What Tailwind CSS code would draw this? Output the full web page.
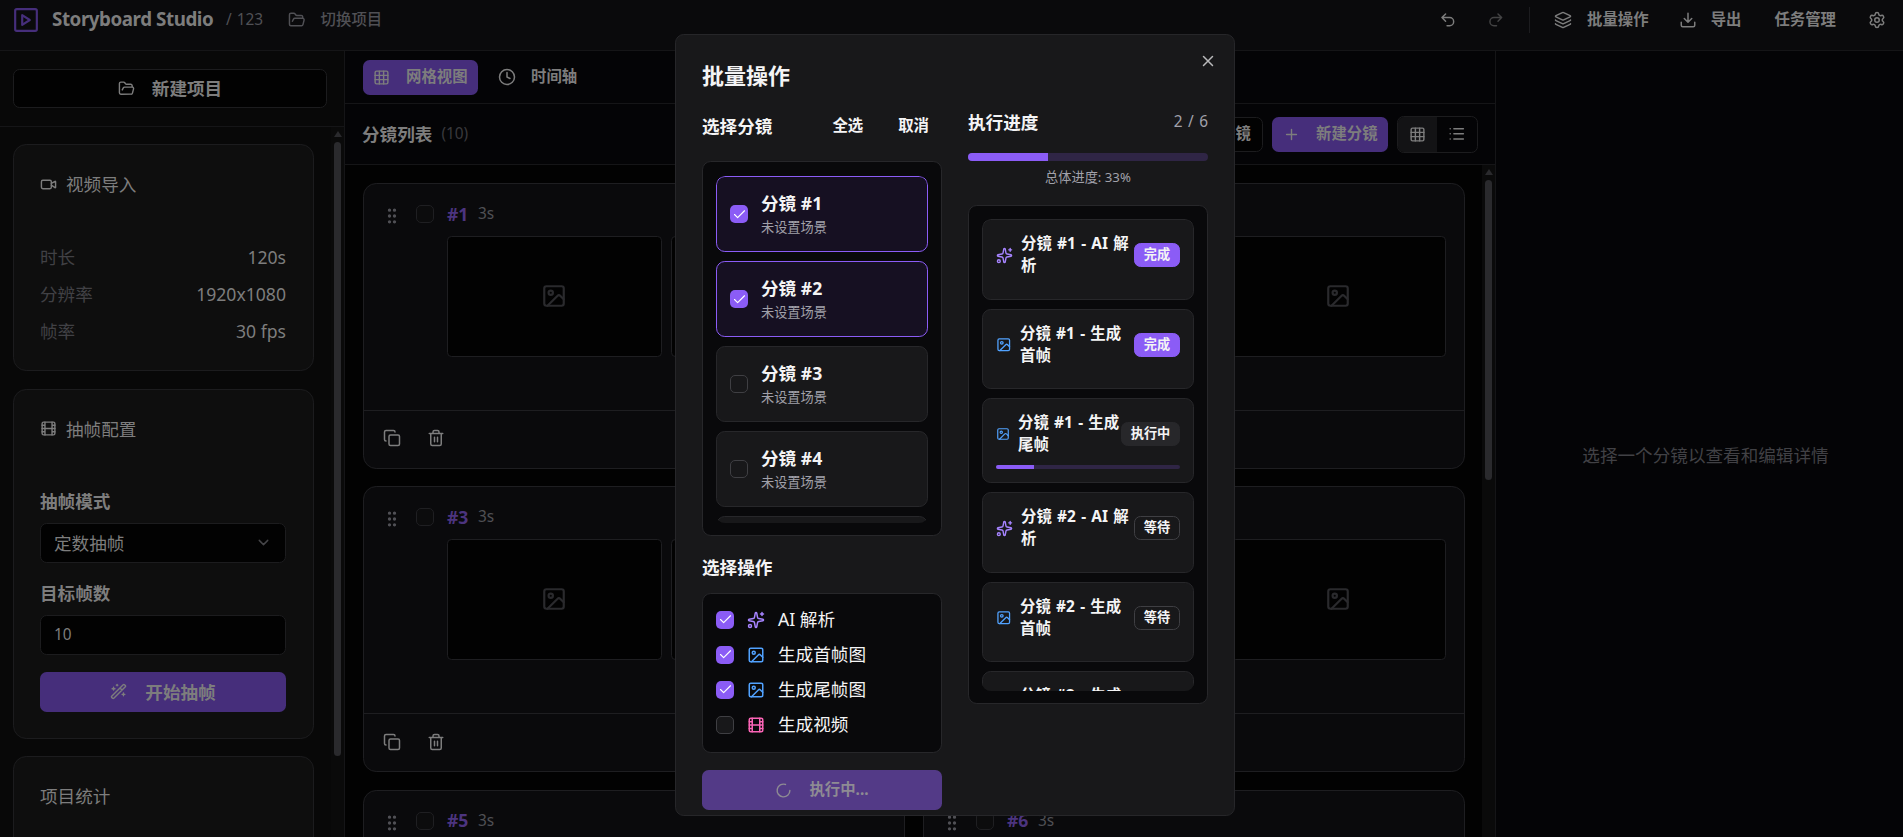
<!DOCTYPE html>
<html lang="zh-CN" class="text-[17.6px]">
<head>
<meta charset="utf-8">
<title>Storyboard Studio</title>
<script src="https://cdn.jsdelivr.net/npm/@tailwindcss/browser@4"></script>
</head>
<body class="relative flex h-screen flex-col overflow-hidden bg-black font-['Noto_Sans','Noto_Sans_CJK_SC',sans-serif] text-base text-[#7d7d7d] [stroke-linecap:round] [stroke-linejoin:round]">
<svg class="hidden">
  <symbol id="logo" viewBox="0 0 24 24"><rect x="2" y="2" width="20" height="20" rx="1.5"/><path d="M8.5 7.5v9l7-4.5z"/></symbol>
  <symbol id="folder" viewBox="0 0 24 24"><path d="m6 14 1.5-2.9A2 2 0 0 1 9.24 10H20a2 2 0 0 1 1.94 2.5l-1.54 6a2 2 0 0 1-1.95 1.5H4a2 2 0 0 1-2-2V5a2 2 0 0 1 2-2h3.9a2 2 0 0 1 1.69.9l.81 1.2a2 2 0 0 0 1.67.9H18a2 2 0 0 1 2 2v2"/></symbol>
  <symbol id="undo" viewBox="0 0 24 24"><path d="M9 14 4 9l5-5M4 9h10.5a5.5 5.5 0 0 1 0 11H11"/></symbol>
  <symbol id="redo" viewBox="0 0 24 24"><path d="m15 14 5-5-5-5M20 9H9.5a5.5 5.5 0 0 0 0 11H13"/></symbol>
  <symbol id="layers" viewBox="0 0 24 24"><path d="M12.83 2.18a2 2 0 0 0-1.66 0L2.6 6.08a1 1 0 0 0 0 1.83l8.58 3.91a2 2 0 0 0 1.66 0l8.58-3.9a1 1 0 0 0 0-1.83zM2 12a1 1 0 0 0 .58.91l8.6 3.91a2 2 0 0 0 1.65 0l8.58-3.9A1 1 0 0 0 22 12M2 17a1 1 0 0 0 .58.91l8.6 3.91a2 2 0 0 0 1.65 0l8.58-3.9A1 1 0 0 0 22 17"/></symbol>
  <symbol id="download" viewBox="0 0 24 24"><path d="M12 15V3M21 15v4a2 2 0 0 1-2 2H5a2 2 0 0 1-2-2v-4M7 10l5 5 5-5"/></symbol>
  <symbol id="gear" viewBox="0 0 24 24"><path d="M9.671 4.136a2.34 2.34 0 0 1 4.659 0 2.34 2.34 0 0 0 3.319 1.915 2.34 2.34 0 0 1 2.33 4.033 2.34 2.34 0 0 0 0 3.831 2.34 2.34 0 0 1-2.33 4.033 2.34 2.34 0 0 0-3.319 1.915 2.34 2.34 0 0 1-4.659 0 2.34 2.34 0 0 0-3.32-1.915 2.34 2.34 0 0 1-2.33-4.033 2.34 2.34 0 0 0 0-3.831A2.34 2.34 0 0 1 6.35 6.051a2.34 2.34 0 0 0 3.319-1.915"/><circle cx="12" cy="12" r="3"/></symbol>
  <symbol id="grid" viewBox="0 0 24 24"><rect x="3" y="3" width="18" height="18" rx="2"/><path d="M3 9h18M3 15h18M9 3v18M15 3v18"/></symbol>
  <symbol id="clock" viewBox="0 0 24 24"><circle cx="12" cy="12" r="10"/><path d="M12 6v6l4 2"/></symbol>
  <symbol id="video" viewBox="0 0 24 24"><path d="m16 13 5.22 3.48a.5.5 0 0 0 .78-.41V7.87a.5.5 0 0 0-.75-.43L16 10.5"/><rect x="2" y="6" width="14" height="12" rx="2"/></symbol>
  <symbol id="film" viewBox="0 0 24 24"><rect x="3" y="3" width="18" height="18" rx="2"/><path d="M7 3v18M3 7.5h4M3 12h18M3 16.5h4M17 3v18M17 7.5h4M17 16.5h4"/></symbol>
  <symbol id="chevron" viewBox="0 0 24 24"><path d="m6 9 6 6 6-6"/></symbol>
  <symbol id="wand" viewBox="0 0 24 24"><path d="m21.64 3.64-1.28-1.28a1.21 1.21 0 0 0-1.72 0L2.36 18.64a1.21 1.21 0 0 0 0 1.72l1.28 1.28a1.2 1.2 0 0 0 1.72 0L21.64 5.36a1.2 1.2 0 0 0 0-1.72M14 7l3 3M5 6v4M19 14v4M10 2v2M7 8H3M21 16h-4M11 3H9"/></symbol>
  <symbol id="plus" viewBox="0 0 24 24"><path d="M5 12h14M12 5v14"/></symbol>
  <symbol id="list" viewBox="0 0 24 24"><path d="M3 5h.01M3 12h.01M3 19h.01M8 5h13M8 12h13M8 19h13"/></symbol>
  <symbol id="grip" viewBox="0 0 24 24"><circle cx="9" cy="12" r="1"/><circle cx="9" cy="5" r="1"/><circle cx="9" cy="19" r="1"/><circle cx="15" cy="12" r="1"/><circle cx="15" cy="5" r="1"/><circle cx="15" cy="19" r="1"/></symbol>
  <symbol id="image" viewBox="0 0 24 24"><rect x="3" y="3" width="18" height="18" rx="2"/><circle cx="9" cy="9" r="2"/><path d="m21 15-3.086-3.086a2 2 0 0 0-2.828 0L6 21"/></symbol>
  <symbol id="copy" viewBox="0 0 24 24"><rect x="8" y="8" width="14" height="14" rx="2"/><path d="M4 16c-1.1 0-2-.9-2-2V4c0-1.100.9-2 2-2h10c1.100 0 2 .9 2 2"/></symbol>
  <symbol id="trash" viewBox="0 0 24 24"><path d="M10 11v6M14 11v6M19 6v14a2 2 0 0 1-2 2H7a2 2 0 0 1-2-2V6M3 6h18M8 6V4a2 2 0 0 1 2-2h4a2 2 0 0 1 2 2v2"/></symbol>
  <symbol id="close" viewBox="0 0 24 24"><path d="M18 6 6 18M6 6l12 12"/></symbol>
  <symbol id="tick" viewBox="0 0 24 24"><path d="M20 6 9 17l-5-5"/></symbol>
  <symbol id="sparkles" viewBox="0 0 24 24"><path d="M11.017 2.814a1 1 0 0 1 1.966 0l1.051 5.558a2 2 0 0 0 1.594 1.594l5.558 1.051a1 1 0 0 1 0 1.966l-5.558 1.051a2 2 0 0 0-1.594 1.594l-1.051 5.558a1 1 0 0 1-1.966 0l-1.051-5.558a2 2 0 0 0-1.594-1.594l-5.558-1.051a1 1 0 0 1 0-1.966l5.558-1.051a2 2 0 0 0 1.594-1.594zM20 2v4M22 4h-4"/><circle cx="4" cy="20" r="2"/></symbol>
  <symbol id="loader" viewBox="0 0 24 24"><path d="M21 12a9 9 0 1 1-6.219-8.560"/></symbol>
</svg>

<header class="flex h-[51px] shrink-0 items-center border-b border-[#151517] bg-[#0a0a0c] pr-[17px] pb-[11px] pl-[13px] text-sm">
  <svg class="size-[26px] fill-none stroke-[#462e7b] stroke-2"><use href="#logo"/></svg>
  <h1 class="ml-[13px] w-[174px] text-[18.8px] font-bold tracking-[-0.45px] whitespace-nowrap">Storyboard Studio</h1>
  <span class="w-[62px] text-[#505055] [word-spacing:1px]">/ 123</span>
  <svg class="size-4 fill-none stroke-[#505055] stroke-2"><use href="#folder"/></svg>
  <span class="ml-[15px] font-medium text-[#505055]">切换项目</span>
  <div class="ml-auto flex items-center font-bold">
    <svg class="size-4 fill-none stroke-[#7d7d7d] stroke-2"><use href="#undo"/></svg>
    <svg class="ml-[31px] size-4 fill-none stroke-[#434344] stroke-2"><use href="#redo"/></svg>
    <div class="ml-[24px] h-[26px] w-px bg-[#1c1c1f]"></div>
    <svg class="ml-[24px] size-[18px] fill-none stroke-[#7d7d7d] stroke-2"><use href="#layers"/></svg>
    <span class="ml-[15px]">批量操作</span>
    <svg class="ml-[30px] size-[18px] fill-none stroke-[#7d7d7d] stroke-2"><use href="#download"/></svg>
    <span class="ml-[14px]">导出</span>
    <span class="ml-[33px]">任务管理</span>
    <svg class="ml-[32px] size-[18px] fill-none stroke-[#7d7d7d] stroke-2"><use href="#gear"/></svg>
  </div>
</header>

<div class="flex min-h-0 flex-1">
  <aside class="flex w-[345px] shrink-0 flex-col border-r border-[#151517] bg-[#080808]">
    <div class="h-[76px] shrink-0 border-b border-[#151517] pt-[18px] pl-[13px]">
      <button class="flex h-[39px] w-[314px] items-center justify-center gap-[17px] rounded-md border border-[#1c1c1e] bg-[#020202] font-bold">
        <svg class="size-[17px] fill-none stroke-[#7d7d7d] stroke-2"><use href="#folder"/></svg>新建项目
      </button>
    </div>
    <div class="flex min-h-0 flex-1 overflow-hidden">
      <div class="flex w-[331px] flex-col gap-4 pt-[17px] pl-[13px]">
        <section class="h-[227.4px] w-[301px] shrink-0 rounded-xl border border-[#1c1c1e] bg-[#0e0e0e] pt-[26px] pr-[27px] pl-[26px]">
          <h2 class="flex h-[26px] items-center gap-[9px]"><svg class="size-[17px] fill-none stroke-[#7d7d7d] stroke-2"><use href="#video"/></svg>视频导入</h2>
          <dl class="mt-[42px] text-[#7d7d7d]">
            <div class="flex h-[37px] items-center justify-between"><dt class="text-[#414145]">时长</dt><dd>120s</dd></div>
            <div class="flex h-[37px] items-center justify-between"><dt class="text-[#414145]">分辨率</dt><dd>1920x1080</dd></div>
            <div class="flex h-[37px] items-center justify-between"><dt class="text-[#414145]">帧率</dt><dd>30 fps</dd></div>
          </dl>
        </section>
        <section class="h-[349.6px] w-[301px] shrink-0 rounded-xl border border-[#1c1c1e] bg-[#0e0e0e] pt-[26px] pr-[27px] pl-[26px]">
          <h2 class="flex h-[26px] items-center gap-[9px]"><svg class="size-[17px] fill-none stroke-[#7d7d7d] stroke-2"><use href="#film"/></svg>抽帧配置</h2>
          <div class="mt-[46px] flex h-[26px] items-center font-bold">抽帧模式</div>
          <div class="mt-[9px] flex h-[40px] items-center justify-between rounded-md border border-[#1c1c1e] bg-[#020202] pr-[13px] pl-[13px]">定数抽帧<svg class="size-[17px] fill-none stroke-[#454548] stroke-2"><use href="#chevron"/></svg></div>
          <div class="mt-[17px] flex h-[26px] items-center font-bold">目标帧数</div>
          <div class="mt-[9px] flex h-[40px] items-center rounded-md border border-[#1c1c1e] bg-[#020202] px-[13px] text-sm">10</div>
          <button class="mt-[17px] flex h-[40px] w-full items-center justify-center gap-[18px] rounded-md bg-[#462e7b] font-bold"><svg class="size-[17px] fill-none stroke-[#7d7d7d] stroke-2"><use href="#wand"/></svg>开始抽帧</button>
        </section>
        <section class="h-[227px] w-[301px] shrink-0 rounded-xl border border-[#1c1c1e] bg-[#0e0e0e] px-[26px] pt-[26px]">
          <h2 class="flex h-[26px] items-center">项目统计</h2>
        </section>
      </div>
      <div class="flex w-[13px] flex-col items-center bg-[#0a0a0a] pt-[4px]">
        <svg class="h-[6px] w-[8px] fill-[#2a2a2d]" viewBox="0 0 8 6"><path d="M4 0l4 6H0z"/></svg>
        <div class="mt-[5px] h-[614px] w-[7px] rounded-full bg-[#2a2a2d]"></div>
      </div>
    </div>
  </aside>

  <main class="flex w-[1151px] shrink-0 flex-col border-r border-[#151517] bg-[#020202]">
    <div class="flex h-[53px] shrink-0 items-center border-b border-[#151517] bg-[#040406] pl-[18px] text-sm font-bold">
      <div class="flex h-[35px] w-[115px] items-center gap-[16px] rounded-md bg-[#462e7b] pl-[10px]"><svg class="size-[17px] fill-none stroke-[#7d7d7d] stroke-2"><use href="#grid"/></svg>网格视图</div>
      <svg class="ml-[20px] size-[18px] fill-none stroke-[#7d7d7d] stroke-2"><use href="#clock"/></svg>
      <span class="ml-[15px]">时间轴</span>
    </div>
    <div class="flex h-[61px] shrink-0 items-center border-b border-[#151517] bg-[#040406] pr-[17px] pl-[17px]">
      <h2 class="font-bold">分镜列表</h2>
      <span class="ml-[9px] text-sm text-[#39393d]">(10)</span>
      <div class="ml-auto flex h-[35px] w-[118px] items-center justify-end rounded-md border border-[#1c1c1e] bg-[#020202] pr-[11px] text-sm font-bold whitespace-nowrap">选择分镜</div>
      <div class="ml-[9px] flex h-[35px] w-[116px] items-center gap-[16px] rounded-md bg-[#462e7b] pl-[11px] text-sm font-bold"><svg class="size-[17px] fill-none stroke-[#7d7d7d] stroke-2"><use href="#plus"/></svg>新建分镜</div>
      <div class="ml-[9px] flex h-[37px] w-[81px] overflow-hidden rounded-md border border-[#1c1c1e]">
        <div class="flex w-[39px] items-center justify-center bg-[#131315]"><svg class="size-[17px] fill-none stroke-[#7d7d7d] stroke-2"><use href="#grid"/></svg></div>
        <div class="flex flex-1 items-center justify-center pr-px"><svg class="size-[17.6px] fill-none stroke-[#7d7d7d] stroke-2"><use href="#list"/></svg></div>
      </div>
    </div>
    <div class="flex min-h-0 flex-1 overflow-hidden">
      <div id="shots" class="grid w-[1137px] auto-rows-[285.7px] grid-cols-[542px_542px] content-start gap-x-[18px] gap-y-4 pt-[18px] pl-[18px]"></div>
      <div class="flex w-[13px] flex-col items-center bg-[#0a0a0a] pt-[4px]">
        <svg class="h-[6px] w-[8px] fill-[#2a2a2d]" viewBox="0 0 8 6"><path d="M4 0l4 6H0z"/></svg>
        <div class="mt-[5px] h-[300px] w-[7px] rounded-full bg-[#2a2a2d]"></div>
      </div>
    </div>
  </main>

  <aside class="flex flex-1 items-center justify-center bg-[#040406] pt-[23px] pl-[12px] text-[#414145]">
    <p>选择一个分镜以查看和编辑详情</p>
  </aside>
</div>

<div role="dialog" class="absolute top-[34px] left-[675px] flex h-[782px] w-[560px] flex-col rounded-lg border border-[#262629] bg-[#18181a] px-[26px] text-[#f4f4f5]">
  <svg class="absolute top-[17px] right-[17px] size-[18px] fill-none stroke-[#b9b9bb] stroke-2"><use href="#close"/></svg>
  <h2 class="mt-[24px] flex h-[32px] items-center text-[22px] font-bold">批量操作</h2>
  <div class="flex gap-[26px]">
    <div class="flex w-[240px] flex-col">
      <div class="mt-[17px] flex h-[36px] items-center">
        <h3 class="font-bold">选择分镜</h3>
        <span class="ml-auto text-sm font-bold">全选</span><span class="mr-[13px] ml-[35px] text-sm font-bold">取消</span>
      </div>
      <div class="mt-[17px] h-[375px] rounded-lg border border-[#27272a] bg-[#09090b] px-[13px] pt-[14px]">
        <div id="picks" class="flex h-[347px] flex-col gap-[9px] overflow-hidden rounded-lg"></div>
      </div>
      <h3 class="mt-[18px] flex h-[26px] items-center font-bold">选择操作</h3>
      <div id="ops" class="mt-[13px] flex h-[160px] flex-col rounded-lg border border-[#27272a] bg-[#09090b] pt-[8px] pl-[13px]"></div>
      <button class="mt-[17px] flex h-[40px] items-center justify-center gap-[17px] rounded-md bg-[#533a87] text-sm font-bold text-[#8e8b93]"><svg class="size-[17px] fill-none stroke-[#8e8b93] stroke-2"><use href="#loader"/></svg>执行中...</button>
    </div>
    <div class="flex w-[240px] flex-col">
      <div class="mt-[18px] flex h-[26px] items-center justify-between"><h3 class="font-bold">执行进度</h3><span class="text-sm text-[#a1a1aa] [word-spacing:1.5px]">2 / 6</span></div>
      <div class="mt-[18px] h-[8px] overflow-hidden rounded-full bg-[#2f2545]"><div class="h-full w-[80px] bg-[#8b5cf6]"></div></div>
      <p class="mt-[8px] flex h-[18px] items-center justify-center text-xs text-[#a1a1aa]">总体进度: 33%</p>
      <div class="mt-[18px] h-[499px] rounded-lg border border-[#27272a] bg-[#09090b] p-[13px]">
        <div id="tasks" class="flex h-[472px] flex-col gap-[9px] overflow-hidden rounded-lg"></div>
      </div>
    </div>
  </div>
</div>

<script>
const put = (id, list, fn) => { document.getElementById(id).innerHTML = list.map(fn).join(''); };
const thumb = '<div class="flex h-[121px] w-[215px] items-center justify-center rounded-sm border border-[#1e1e21] bg-[#020202] pr-px pb-px"><svg class="size-[26px] fill-none stroke-[#2a2a2d] stroke-2"><use href="#image"/></svg></div>';

put('shots', [1, 2, 3, 4, 5, 6], n => `
  <article class="flex flex-col rounded-xl border border-[#1e1e21] bg-[#0a0a0c]">
    <div class="flex h-[227px] border-b border-[#1e1e21] pt-[17px]">
      <svg class="mt-[5px] ml-[18px] size-[20px] fill-[#505055] stroke-[#505055] stroke-2"><use href="#grip"/></svg>
      <div class="mt-[4px] ml-[14px] size-[18px] rounded-[5px] border border-[#1f1f22] bg-[#0c0c0d]"></div>
      <div class="ml-[13px]">
        <div class="flex h-[26px] items-center"><span class="w-[31px] font-bold text-[#4c347f]">#${n}</span><span class="text-sm text-[#505055]">3s</span></div>
        <div class="mt-[9px] flex gap-[9px]">${thumb}${thumb}</div>
      </div>
    </div>
    <div class="flex flex-1 items-center gap-[26px] pb-[2px] pl-[19px]">
      <svg class="size-[18px] fill-none stroke-[#7d7d7d] stroke-2"><use href="#copy"/></svg>
      <svg class="size-[18px] fill-none stroke-[#7d7d7d] stroke-2"><use href="#trash"/></svg>
    </div>
  </article>`);

const box = on => on
  ? '<span class="flex size-[18px] shrink-0 items-center justify-center rounded-[5px] bg-[#8b5cf6]"><svg class="size-[15px] fill-none stroke-white stroke-[1.8]"><use href="#tick"/></svg></span>'
  : '<span class="size-[18px] shrink-0 rounded-[5px] border border-[#3f3f43] bg-[#18181a]"></span>';

put('picks', [1, 2, 3, 4, 5], n => `
  <div class="flex h-[76px] shrink-0 items-center gap-[13px] rounded-lg border pl-[13px] ${n < 3 ? 'border-[#8b5cf6] bg-[#161022]' : 'border-[#27272a] bg-[#18181a]'}">
    ${box(n < 3)}
    <div class="pb-px"><div class="h-[26px] leading-[26px] font-bold">分镜 #${n}</div><div class="h-[22px] text-xs leading-[22px] text-[#a1a1aa]">未设置场景</div></div>
  </div>`);

const ICON = {
  ai: ['sparkles', 'stroke-[#a684ff]'],
  img: ['image', 'stroke-[#51a2ff]'],
  film: ['film', 'stroke-[#fb64b6]'],
};
put('ops', [['AI 解析', 'ai', 1], ['生成首帧图', 'img', 1], ['生成尾帧图', 'img', 1], ['生成视频', 'film', 0]], ([t, i, on]) => `
  <div class="flex h-[35px] items-center">${box(on)}
    <svg class="mr-[13px] ml-[13px] size-[18px] fill-none stroke-2 ${ICON[i][1]}"><use href="#${ICON[i][0]}"/></svg>${t}</div>`);

const BADGE = {
  '完成': 'border-[#8b5cf6] bg-[#8b5cf6] w-[46px]',
  '执行中': 'border-[#27272a] bg-[#27272a] w-[59px]',
  '等待': 'border-[#3f3f43] w-[46px]',
};
const SIZE = { ai: 'size-[17px] mr-[8px]', img: 'size-[15.5px] mr-[8.5px]', run: 'size-[14px] mr-[8px]' };
put('tasks', [
  ['#1', 'AI 解<br>析', 'ai', '完成'], ['#1', '生成<br>首帧', 'img', '完成'], ['#1', '生成<br>尾帧', 'img', '执行中'],
  ['#2', 'AI 解<br>析', 'ai', '等待'], ['#2', '生成<br>首帧', 'img', '等待'], ['#2', '生成<br>尾帧', 'img', ''],
], ([n, t, i, s]) => `
  <div class="shrink-0 rounded-lg border border-[#27272a] bg-[#18181a] px-[13px] pt-[13px] ${s === '执行中' ? 'h-[85px]' : 'h-[80.6px]'}">
    <div class="flex h-[44px] items-center">
      <svg class="shrink-0 fill-none stroke-2 ${ICON[i][1]} ${s === '执行中' ? SIZE.run : SIZE[i]}"><use href="#${ICON[i][0]}"/></svg>
      <div class="min-w-0 flex-1 text-sm leading-[22px] font-bold whitespace-nowrap [word-spacing:1.3px]">分镜 ${n} - ${t}</div>
      ${s ? `<span class="flex h-[24px] shrink-0 items-center justify-center rounded-md border text-xs font-bold ${BADGE[s]}">${s}</span>` : ''}
    </div>
    ${s === '执行中' ? '<div class="mt-[9px] h-[4px] overflow-hidden rounded-full bg-[#2f2545]"><div class="h-full w-[38px] bg-[#8b5cf6]"></div></div>' : ''}
  </div>`);
</script>
</body>
</html>
